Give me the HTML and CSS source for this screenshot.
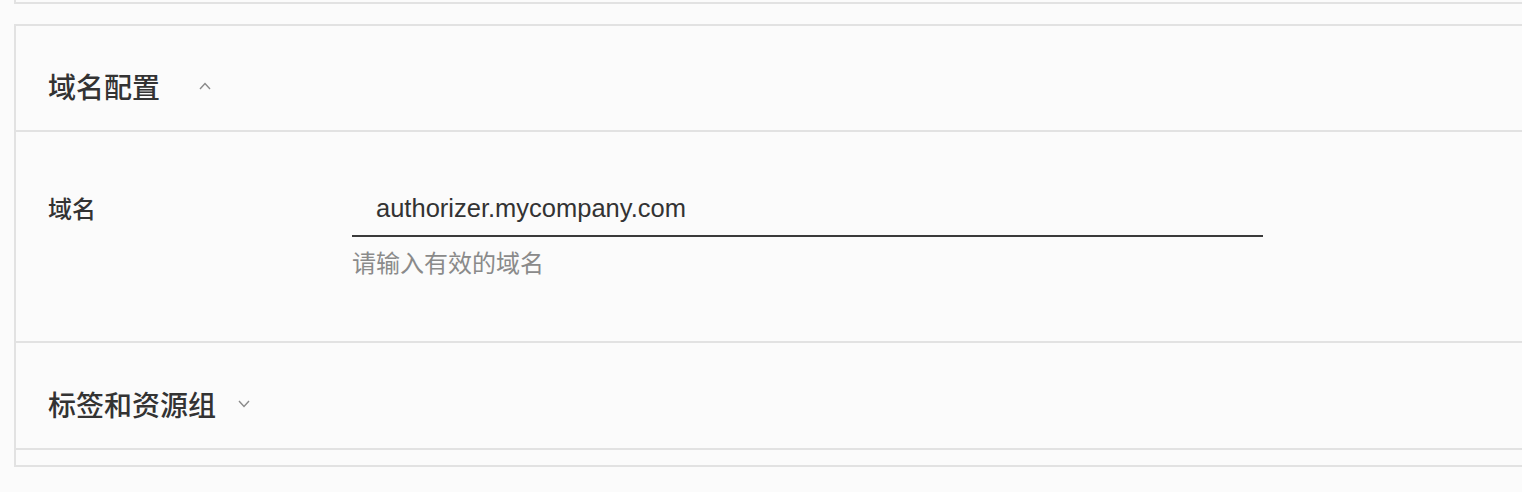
FILE: index.html
```html
<!DOCTYPE html>
<html lang="zh-CN">
<head>
<meta charset="utf-8">
<title>域名配置</title>
<link rel="stylesheet" href="styles.css">
</head>
<body>
<div class="page">
  <div class="prev-card"></div>
  <section class="card">
    <div class="section-head head-domain">
      <h2 class="section-title">域名配置</h2>
      <span class="chevron chevron-up">
        <svg width="12" height="8" viewBox="0 0 12 8"><path d="M1 7 L6 1.5 L11 7" fill="none" stroke="#8a8a8a" stroke-width="1.4"/></svg>
      </span>
    </div>
    <div class="form-body">
      <div class="form-row">
        <label class="field-label">域名</label>
        <div class="field">
          <div class="input-box">authorizer.mycompany.com</div>
          <div class="helper">请输入有效的域名</div>
        </div>
      </div>
    </div>
    <div class="section-head head-tags">
      <h2 class="section-title">标签和资源组</h2>
      <span class="chevron chevron-down">
        <svg width="12" height="8" viewBox="0 0 12 8"><path d="M1 1 L6 6.5 L11 1" fill="none" stroke="#8a8a8a" stroke-width="1.4"/></svg>
      </span>
    </div>
    <div class="card-foot"></div>
  </section>
</div>
</body>
</html>
```
FILE: styles.css
```css
html, body {
  margin: 0;
  padding: 0;
}
body {
  background: #fbfbfb;
  font-family: "Liberation Sans", "Noto Sans CJK SC", sans-serif;
  color: #333;
  overflow: hidden;
}
.page {
  padding-left: 14px;
}
.prev-card {
  height: 2px;
  border-left: 2px solid #e2e2e2;
  border-bottom: 2px solid #e2e2e2;
}
.card {
  margin-top: 20px;
  border: 2px solid #e2e2e2;
  border-right: none;
}
.section-head {
  display: flex;
  align-items: center;
  padding-left: 32px;
  padding-top: 16px;
  box-sizing: border-box;
  border-bottom: 2px solid #e2e2e2;
}
.head-domain {
  height: 106px;
}
.head-tags {
  height: 107px;
}
.section-title {
  margin: 0;
  font-size: 28px;
  font-weight: 500;
  line-height: 36px;
  color: #333;
  font-family: "Noto Sans CJK SC", sans-serif;
}
.chevron {
  display: flex;
  align-items: center;
}
.chevron-up {
  margin-left: 39px;
}
.chevron-down {
  margin-left: 22px;
}
.form-body {
  height: 211px;
  box-sizing: border-box;
  padding-top: 50px;
  border-bottom: 2px solid #e2e2e2;
}
.form-row {
  display: grid;
  grid-template-columns: 304px 911px;
  padding-left: 32px;
}
.field-label {
  font-family: "Noto Sans CJK SC", sans-serif;
  font-size: 24px;
  font-weight: 500;
  line-height: 52px;
  color: #333;
}
.input-box {
  height: 55px;
  box-sizing: border-box;
  border-bottom: 2px solid #3a3a3a;
  padding-left: 24px;
  font-size: 25.5px;
  line-height: 52px;
  color: #333;
}
.helper {
  margin-top: 10px;
  font-family: "Noto Sans CJK SC", sans-serif;
  font-size: 24px;
  line-height: 30px;
  color: #8a8a8a;
}
.card-foot {
  height: 15px;
}
```
